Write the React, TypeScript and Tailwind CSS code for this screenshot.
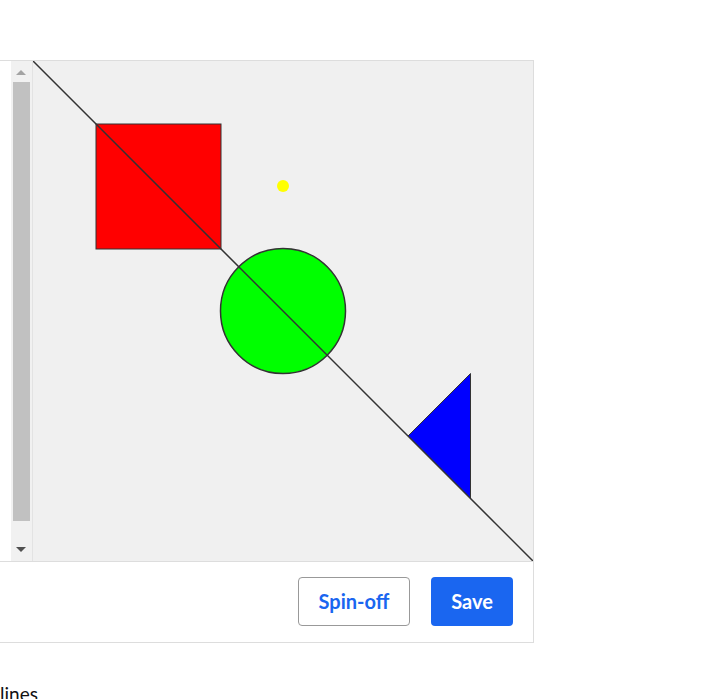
const BLUE = '#1a66f0'

const Scrollbar = () => (
  <div className="flex w-[22px] flex-col items-center border-r border-[#e3e3e3] bg-[#f1f1f1]">
    <div className="flex h-[21px] w-full items-center justify-center pt-[1px] pr-[1px]">
      <div className="h-0 w-0 border-x-[5px] border-b-[5px] border-x-transparent border-b-[#a3a3a3]" />
    </div>
    <div className="mr-[1px] w-[17px] flex-1 bg-[#c1c1c1]" />
    <div className="flex h-[40px] w-full items-center justify-center pt-[16px] pr-[1px]">
      <div className="h-0 w-0 border-x-[5px] border-t-[5px] border-x-transparent border-t-[#505050]" />
    </div>
  </div>
)

const Drawing = () => (
  <svg width="500" height="500" viewBox="0 0 500 500" className="block bg-[#f0f0f0]">
    <rect x="63" y="63" width="125" height="125" fill="#ff0000" stroke="#333" strokeWidth="1" />
    <circle cx="250" cy="125" r="6" fill="#ffff00" />
    <circle cx="250" cy="250" r="62.5" fill="#00ff00" stroke="#333" strokeWidth="1.5" />
    <polygon points="375,375 437.5,312.5 437.5,437.5" fill="#0000ff" stroke="#333" strokeWidth="1" />
    <line x1="0" y1="0" x2="500" y2="500" stroke="#333" strokeWidth="1.5" />
  </svg>
)

export default function App() {
  return (
    <div className="min-h-screen bg-white pt-[60px] font-['Lato','Noto_Sans',sans-serif]">
      <div className="w-[534px] border border-l-0 border-[#dddddd] bg-white">
        <div className="flex">
          <div className="w-[11px]" />
          <Scrollbar />
          <Drawing />
        </div>
        <div className="flex justify-end gap-[21px] border-t border-[#dddddd] px-[20px] pt-[15px] pb-[16px]">
          <button className="h-[49px] w-[112px] rounded-[4px] border border-[#999] bg-white pb-[1px] text-[20px] font-bold" style={{ color: BLUE }}>
            Spin-off
          </button>
          <button className="h-[49px] w-[82px] rounded-[4px] pb-[1px] text-[20px] font-bold text-white" style={{ backgroundColor: BLUE }}>
            Save
          </button>
        </div>
      </div>
      <div className="mt-[38px] text-[19px] leading-[26px] text-[#111]">lines</div>
    </div>
  )
}
